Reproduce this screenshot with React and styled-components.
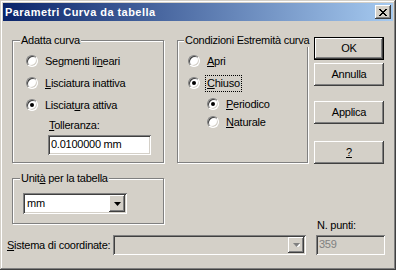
import React from 'react';
import styled, { createGlobalStyle } from 'styled-components';

const GlobalStyle = createGlobalStyle`
  body {
    margin: 0;
    background: #fff;
  }
  * {
    box-sizing: border-box;
  }
`;

const raised = `
  inset -1px -1px 0 #404040,
  inset 1px 1px 0 #fff,
  inset -2px -2px 0 #808080,
  inset 2px 2px 0 #d4d0c8
`;

const sunken = `
  inset 1px 1px 0 #808080,
  inset -1px -1px 0 #fff,
  inset 2px 2px 0 #404040,
  inset -2px -2px 0 #d4d0c8
`;

const Window = styled.div`
  width: 396px;
  height: 270px;
  padding: 3px;
  display: flex;
  flex-direction: column;
  background: #d4d0c8;
  box-shadow: inset -1px -1px 0 #404040, inset 1px 1px 0 #d4d0c8,
    inset -2px -2px 0 #808080, inset 2px 2px 0 #fff;
  font: 11px/13px 'Liberation Sans', Arial, sans-serif;
  letter-spacing: -0.25px;
  color: #000;
`;

const TitleBar = styled.div`
  height: 18px;
  padding: 0 2px;
  display: flex;
  align-items: center;
  justify-content: space-between;
  background: linear-gradient(to right, #0a246a, #a6caf0);
`;

const Title = styled.span`
  color: #fff;
  font-weight: bold;
  letter-spacing: 0.45px;
`;

const CloseButton = styled.div`
  width: 16px;
  height: 14px;
  display: flex;
  align-items: center;
  justify-content: center;
  background: #d4d0c8;
  box-shadow: ${raised};
`;

const Body = styled.div`
  flex: 1;
  display: flex;
  flex-direction: column;
  padding-left: 4px;
`;

const TopRow = styled.div`
  display: flex;
  align-items: flex-start;
  margin-top: 16px;
  padding-left: 5px;
`;

const Column = styled.div`
  display: flex;
  flex-direction: column;
  margin-top: ${(p) => p.$top || 0}px;
`;

const Group = styled.div`
  position: relative;
  width: ${(p) => p.$w}px;
  height: ${(p) => p.$h}px;
  margin-top: ${(p) => p.$top || 0}px;
  margin-left: ${(p) => p.$left || 0}px;
  padding-top: ${(p) => p.$padTop}px;
  border: 1px solid #808080;
  box-shadow: inset 1px 1px 0 #fff, 1px 1px 0 #fff;
`;

const Legend = styled.span`
  position: absolute;
  top: -7px;
  left: ${(p) => p.$left}px;
  padding: 0 1px;
  white-space: nowrap;
  background: #d4d0c8;
`;

const RadioRow = styled.div`
  display: flex;
  align-items: center;
  gap: 6px;
  height: ${(p) => p.$h || 22}px;
  padding-left: ${(p) => p.$indent}px;
  margin-top: ${(p) => p.$top || 0}px;
`;

const RadioDot = styled.span`
  position: relative;
  flex: none;
  width: 12px;
  height: 12px;
  border-radius: 50%;
  background: #fff;
  border: 1px solid;
  border-color: #808080 #fff #fff #808080;
  box-shadow: inset 1px 1px 0 #404040, inset -1px -1px 0 #d4d0c8;

  &::after {
    content: '';
    display: ${(p) => (p.$checked ? 'block' : 'none')};
    position: absolute;
    left: 3px;
    top: 3px;
    width: 4px;
    height: 4px;
    border-radius: 50%;
    background: #000;
  }
`;

const RadioText = styled.span`
  padding: 1px;
  margin-left: -1px;
  border: 1px dotted ${(p) => (p.$focus ? '#000' : 'transparent')};
  white-space: nowrap;
`;

const FieldBlock = styled.div`
  display: flex;
  flex-direction: column;
  margin: 3px 0 0 35px;
`;

const FieldLabel = styled.span`
  padding-left: 1px;
  margin-bottom: 3px;
`;

const TextBox = styled.div`
  width: ${(p) => p.$w}px;
  height: 20px;
  padding: 3px 3px 0;
  background: ${(p) => (p.$disabled ? '#d4d0c8' : '#fff')};
  color: ${(p) => (p.$disabled ? '#808080' : '#000')};
  box-shadow: ${sunken};
  white-space: nowrap;
`;

const Combo = styled.div`
  display: flex;
  align-items: stretch;
  width: ${(p) => p.$w}px;
  height: ${(p) => p.$h || 21}px;
  margin-left: ${(p) => p.$left || 0}px;
  padding: 2px;
  background: ${(p) => (p.$disabled ? '#d4d0c8' : '#fff')};
  box-shadow: ${sunken};
`;

const ComboValue = styled.span`
  flex: 1;
  padding: 2px 0 0 2px;
`;

const ComboArrow = styled.div`
  width: 16px;
  display: flex;
  align-items: center;
  justify-content: center;
  background: #d4d0c8;
  box-shadow: ${raised};
`;

const ButtonColumn = styled.div`
  display: flex;
  flex-direction: column;
  width: 70px;
  margin-left: 6px;
`;

const Button = styled.div`
  height: 23px;
  margin-top: ${(p) => p.$top || 0}px;
  display: flex;
  align-items: center;
  justify-content: center;
  background: #d4d0c8;
  border: ${(p) => (p.$default ? '1px solid #000' : 'none')};
  box-shadow: ${raised};
`;

const BottomRow = styled.div`
  display: flex;
  align-items: flex-end;
  margin-top: -5px;
`;

const InlineLabel = styled.span`
  width: 106px;
  height: 20px;
  line-height: 20px;
  white-space: nowrap;
`;

const PointsColumn = styled.div`
  display: flex;
  flex-direction: column;
  margin-left: 10px;
`;

const Arrow = ({ disabled }) => (
  <svg width="7" height="4" viewBox="0 0 7 4">
    {disabled && <path d="M1 1h7l-3.5 4z" fill="#fff" />}
    <path d="M0 0h7l-3.5 4z" fill={disabled ? '#808080' : '#000'} />
  </svg>
);

const Radio = ({ checked, indent, h, top, focus, children }) => (
  <RadioRow $indent={indent} $h={h} $top={top}>
    <RadioDot $checked={checked} />
    <RadioText $focus={focus}>{children}</RadioText>
  </RadioRow>
);

export default function App() {
  return (
    <>
      <GlobalStyle />
      <Window>
        <TitleBar>
          <Title>Parametri Curva da tabella</Title>
          <CloseButton>
            <svg width="8" height="7" viewBox="0 0 8 7" shapeRendering="crispEdges">
              <path
                d="M0 0h2v1h1v1h2v-1h1v-1h2v1h-1v1h-1v1h-1v1h1v1h1v1h1v1h-2v-1h-1v-1h-2v1h-1v1h-2v-1h1v-1h1v-1h1v-1h-1v-1h-1v-1h-1z"
                fill="#000"
              />
            </svg>
          </CloseButton>
        </TitleBar>

        <Body>
          <TopRow>
            <Column $top={3}>
              <Group $w={152} $h={123} $padTop={9}>
                <Legend $left={7}>Adatta curva</Legend>
                <Radio indent={13}>
                  Segmenti li<u>n</u>eari
                </Radio>
                <Radio indent={13}>
                  <u>L</u>isciatura inattiva
                </Radio>
                <Radio indent={13} checked>
                  Lisciat<u>u</u>ra attiva
                </Radio>
                <FieldBlock>
                  <FieldLabel>
                    <u>T</u>olleranza:
                  </FieldLabel>
                  <TextBox $w={103}>0.0100000 mm</TextBox>
                </FieldBlock>
              </Group>

              <Group $w={152} $h={46} $top={15} $padTop={14}>
                <Legend $left={7}>
                  Unit<u>à</u> per la tabella
                </Legend>
                <Combo $w={104} $left={10}>
                  <ComboValue>mm</ComboValue>
                  <ComboArrow>
                    <Arrow />
                  </ComboArrow>
                </Combo>
              </Group>
            </Column>

            <Group $w={131} $h={123} $top={3} $left={13} $padTop={9}>
              <Legend $left={6}>Condizioni Estremità curva</Legend>
              <Radio indent={10}>
                <u>A</u>pri
              </Radio>
              <Radio indent={10} checked focus>
                <u>C</u>hiuso
              </Radio>
              <Radio indent={29} h={18} top={1} checked>
                <u>P</u>eriodico
              </Radio>
              <Radio indent={29} h={18}>
                <u>N</u>aturale
              </Radio>
            </Group>

            <ButtonColumn>
              <Button $default>OK</Button>
              <Button $top={3}>Annulla</Button>
              <Button $top={15}>Applica</Button>
              <Button $top={17}>
                <u>?</u>
              </Button>
            </ButtonColumn>
          </TopRow>

          <BottomRow>
            <InlineLabel>
              <u>S</u>istema di coordinate:
            </InlineLabel>
            <Combo $w={193} $h={20} $disabled>
              <ComboValue />
              <ComboArrow>
                <Arrow disabled />
              </ComboArrow>
            </Combo>
            <PointsColumn>
              <FieldLabel>N. punti:</FieldLabel>
              <TextBox $w={69} $disabled>
                359
              </TextBox>
            </PointsColumn>
          </BottomRow>
        </Body>
      </Window>
    </>
  );
}
